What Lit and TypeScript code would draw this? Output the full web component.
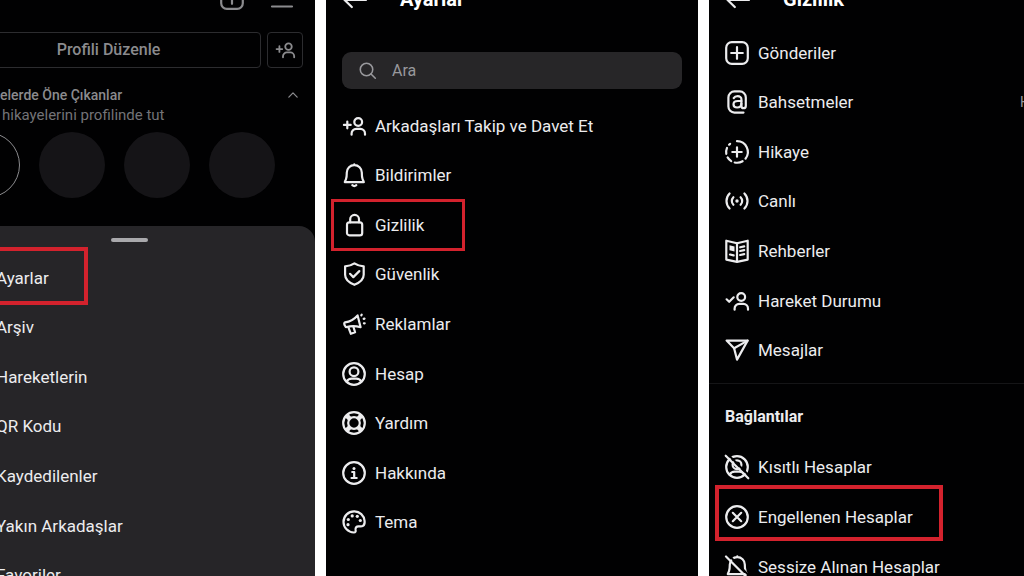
import { LitElement, html, svg, css, nothing, TemplateResult, SVGTemplateResult } from "lit";
import { customElement, property } from "lit/decorators.js";

const person = svg`<circle cx="16.2" cy="8" r="3.900"/><path d="M9.600 20.700v-1.200a4.600 4.600 0 0 1 4.600-4.600h4.200a4.600 4.600 0 0 1 4.600 4.600v1.200"/>`;
const bell = svg`<path d="M12.3 2.2a7.400 7.400 0 0 0-7.500 7.400c0 2.600 0 4.600-.8 6.600-.4 1.100-1 1.500-1.200 3h19c-.2-1.500-.8-1.900-1.200-3-.8-2-.8-4-.8-6.600a7.400 7.400 0 0 0-7.500-7.400zM12.300 2.200v-.9"/>`;

const icons: Record<string, SVGTemplateResult> = {
  addPerson: svg`<path d="M5.300 7.500v6.800M1.900 10.900h6.800"/>${person}`,
  checkPerson: svg`<path d="M1.600 10.300l2.600 2.500 4.500-4.500"/>${person}`,
  bell: svg`${bell}<path d="M10.300 22.200c1.200 1 2.800 1 4 0"/>`,
  bellOff: svg`${bell}<path d="M10.300 22.200c1.200 1 2.800 1 4 0"/><path class="cut" d="M3.500 0l22 22"/><path d="M1 1.500l22 22"/>`,
  lock: svg`<rect x="5" y="9.300" width="15.200" height="13" rx="2.400"/><path d="M8.200 9.300V6.300a4.400 4.400 0 0 1 8.800 0v3"/>`,
  shield: svg`<path d="M12.400 1.400c2.800 1.900 5.900 2.800 9.300 2.900v8.500c0 4.800-3.800 7.800-9.300 10-5.500-2.200-9.300-5.200-9.300-10V4.300c3.400-.1 6.500-1 9.300-2.900z"/><path d="M8 11.800l3.300 3.300 6-6"/>`,
  megaphone: svg`<path d="M3 10.400C8 9.600 12.200 7.200 15.600 3.400l3 11.800c-5-1.500-9.200-1.600-13.900-.2-1.500.300-3.600-4.100-1.700-4.600z"/><path d="M6.300 15.200l2.600 6.600 4.200-1.500-1.700-5.500"/><path d="M19.300 3.300l.4-.6M21.700 6.900l.8-.3M21.900 11.300h.8"/>`,
  account: svg`<circle cx="12" cy="12" r="10.800"/><circle cx="12" cy="9.700" r="4.400"/><path d="M4.700 19.700c1-2 2.900-3 5-3h4.600c2.100 0 4 1 5 3"/>`,
  help: svg`<circle cx="12" cy="12" r="10.800"/><circle cx="12" cy="12" r="5.800"/><path class="thick" d="M4.700 4.700l3.200 3.200M19.300 4.700l-3.200 3.200M4.700 19.300l3.200-3.200M19.300 19.300l-3.200-3.200"/>`,
  info: svg`<circle cx="12" cy="12" r="10.800"/><circle class="solid" cx="12" cy="7.400" r="1.500"/><path d="M10.200 11h2v6M9.500 17h5.200"/>`,
  palette: svg`<path d="M12.500 1.400C6.300 1.200 1.500 6 1.500 12c0 5.600 4.600 10.300 10.400 10.500 1.600 0 2-1.100 1.700-2.500-.3-2.200.8-3.800 3-3.700 1.500.1 3 .5 4.400-.4 1.500-1 1.800-3 1.600-4.900-.5-5.500-4.900-9.500-10.100-9.600z"/><g class="solid"><circle cx="6" cy="14.700" r="1.600"/><circle cx="6.300" cy="9.500" r="1.600"/><circle cx="10.200" cy="5.900" r="1.600"/><circle cx="15.300" cy="6.300" r="1.600"/><circle cx="18.300" cy="10.500" r="1.600"/></g>`,
  plusBox: svg`<rect x="1.200" y="1.200" width="21.600" height="21.600" rx="5.600"/><path d="M12 6.200v11.600M6.200 12h11.600"/>`,
  mention: svg`<path d="M18.500 22.600H9.400a6 6 0 0 1-6-6V7.400a6 6 0 0 1 6-6h5.400a6 6 0 0 1 6 6v8.500c0 3-4.400 3-4.400 0V9.200c0-1.800-1.500-3.100-3.800-3.100-1.900 0-3.200.8-3.900 2"/><path d="M16.400 11h-3.600c-2.500 0-4.300 1-4.300 3.200 0 2 1.500 3.300 3.600 3.300 2.600 0 4.300-1.600 4.300-4"/>`,
  story: svg`<path d="M12 1.200a10.800 10.800 0 0 1 8.500 17.500M17.600 21.200a10.800 10.800 0 0 1-7.900 1.300M6.200 21.100a10.800 10.800 0 0 1-3.600-3.700M1.300 13.800a10.800 10.800 0 0 1 .7-5.900M4.100 4.700a10.800 10.800 0 0 1 1-.9"/><path d="M12 7.300v9.400M7.300 12h9.400"/>`,
  live: svg`<circle class="solid" cx="12" cy="12" r="1.700"/><path d="M8.400 8.200a5.400 5.400 0 0 0 0 7.600M15.600 8.200a5.400 5.400 0 0 1 0 7.600M4.600 4.500a10.600 10.600 0 0 0 0 15M19.400 4.500a10.600 10.600 0 0 1 0 15"/>`,
  guides: svg`<path d="M12 4.200L1.300 1.700v18.900L12 22.800l10.700-2.200V1.700z"/><path d="M12 4.200v18"/><path d="M15.200 8.300l4-.9M15.200 12l4-.9M15.200 16l4-.9M5 15.500l3.600.9"/><path class="solid" d="M4.500 6.300l5 1.100v5l-5-1.100z"/>`,
  send: svg`<path d="M1.600 2.600h21L12 21.600 9.100 10.300z"/><path d="M9.100 10.300l13.500-7.700"/>`,
  restricted: svg`<circle cx="12" cy="12" r="10.800"/><circle cx="12" cy="9.700" r="4.400"/><path d="M4.700 19.700c1-2 2.900-3 5-3h4.600c2.100 0 4 1 5 3"/><path class="cut" d="M2.500 -1l23 23"/><path d="M.700 .700l22.600 22.600"/>`,
  blocked: svg`<circle cx="12" cy="12" r="10.800"/><path d="M7.800 7.800l8.400 8.400M16.200 7.800l-8.400 8.400"/>`,
  back: svg`<path d="M1.500 13h21.500M9.300 5.300L1.600 13l7.200 7"/>`,
  search: svg`<circle cx="10.600" cy="10.600" r="8.800"/><path d="M17 17l6 6"/>`,
  menu: svg`<path d="M2 4h20M2 12h20M2 20.500h20"/>`,
  chevron: svg`<path d="M2 17L12 7l10 10"/>`,
};

const iconStyles = css`
  .icon { display: block; flex: none; width: 24px; height: 24px; fill: none; stroke: currentColor; stroke-width: 2.2; stroke-linecap: round; stroke-linejoin: round; overflow: visible; }
  .icon .solid { fill: currentColor; stroke: none; }
  .icon .thick { stroke-width: 4.5; stroke-linecap: butt; }
  .icon .cut { stroke: #010102; stroke-width: 2; }
  .icon.small { width: 20px; height: 20px; }
  .icon.glass { width: 17px; height: 17px; }
  .icon.tiny { width: 10px; height: 10px; stroke-width: 3; }
`;

const icon = (name: string, size = ""): TemplateResult =>
  html`<svg class="icon ${size}" viewBox="0 0 24 24" aria-hidden="true">${icons[name]}</svg>`;

interface Item {
  label: string;
  icon?: string;
  marked?: boolean;
  value?: string;
}

@customElement("menu-list")
class MenuList extends LitElement {
  @property({ attribute: false }) items: Item[] = [];

  static styles = [
    iconStyles,
    css`
      :host { display: grid; font-size: 17px; }
      .list { display: grid; grid-auto-rows: minmax(44px, 1fr); list-style: none; margin: 0; padding: 0; }
      .row { display: flex; align-items: stretch; justify-content: space-between; }
      .link { position: relative; display: flex; align-items: center; gap: 9px; color: inherit; text-decoration: none; white-space: nowrap; }
      .mark { position: absolute; box-sizing: border-box; inset: var(--mark-inset, -1px -41px -1px -11px); border: var(--mark-width, 4px) solid #d3222d; pointer-events: none; }
      .value { align-self: center; width: 4px; font-size: 14px; color: #98989c; }
    `,
  ];

  render() {
    return html`<ul class="list">
      ${this.items.map(
        (item) => html`<li class="row">
          <a class="link" href="#">
            ${item.icon ? icon(item.icon) : nothing}
            <span>${item.label}</span>
            ${item.marked ? html`<span class="mark"></span>` : nothing}
          </a>
          ${item.value ? html`<span class="value">${item.value}</span>` : nothing}
        </li>`
      )}
    </ul>`;
  }
}

@customElement("app-root")
class AppRoot extends LitElement {
  static styles = [
    iconStyles,
    css`
      :host { display: block; font-family: Roboto, "Noto Sans", sans-serif; font-size: 16px; line-height: 20px; color: #ececee; }
      .screens { display: grid; grid-template-columns: 315fr 372fr 315fr; gap: 11px; height: 100vh; background: #fff; }
      .screen { display: flex; flex-direction: column; min-width: 0; overflow: hidden; background: #010102; }
      button { font: inherit; color: inherit; background: none; border: 0; padding: 0; cursor: pointer; }
      h1, h2, p { margin: 0; }

      .profile { color: #8b8b8e; }
      .tools { display: flex; justify-content: flex-end; gap: 26px; margin-top: -14px; padding-right: 21px; }
      .actions { display: flex; gap: 6px; margin: 22px 12px 0 -44px; }
      .edit, .invite { display: grid; place-items: center; box-sizing: border-box; height: 36px; border: 1px solid #2c2c2f; border-radius: 4px; }
      .edit { flex: 1; font-weight: 500; }
      .invite { width: 36px; }
      .highlights { display: flex; align-items: center; justify-content: space-between; margin: 17px 17px 0 0; }
      .heading { font-size: 14px; font-weight: 500; }
      .hint { color: #737377; font-size: 15px; padding-left: 2px; }
      .stories { display: flex; gap: 19px; margin: 7px 0 0 -46px; }
      .story { flex: none; box-sizing: border-box; width: 66px; height: 66px; border-radius: 50%; background: #151417; }
      .story.first { background: none; border: 1px solid #8b8b8e; }

      .sheet { flex: 1; display: flex; flex-direction: column; margin-top: 28px; background: #262528; border-radius: 0 16px 0 0; color: #ececee; }
      .grip { width: 37px; height: 4px; margin: 12px 0 11px 111px; border-radius: 2px; background: #a9a9ac; }
      .sheet-menu { flex: 1; margin: 0 0 -24px -4px; --mark-inset: -6px -39px -2px -11px; }

      .bar { display: flex; align-items: center; gap: 33px; height: 32px; margin-top: -17px; padding-left: 17px; }
      .title { font-size: 20px; line-height: 24px; font-weight: 700; color: #fff; }
      .search { display: flex; align-items: center; gap: 16px; height: 37px; margin: 37px 16px 12px; padding: 0 17px; box-sizing: border-box; border-radius: 9px; background: #272628; color: #98989c; }
      .field { flex: 1; min-width: 0; padding: 0; border: 0; outline: 0; background: none; font: inherit; color: inherit; }
      .field::placeholder { color: inherit; opacity: 1; }
      .settings { flex: 1; margin: 0 16px 29px; --mark-width: 3px; }
      .privacy { flex: 1; margin: 13px 0 0 16px; }
      .section { margin-top: 8px; padding: 23px 16px 15px; border-top: 1px solid #151517; font-size: 16px; font-weight: 700; }
      .connections { height: 150px; flex: none; margin: 0 16px -16px; --mark-inset: -7px -30px 1px -10px; }
    `,
  ];

  private sheetItems: Item[] = [
    { label: "Ayarlar", marked: true },
    { label: "Arşiv" },
    { label: "Hareketlerin" },
    { label: "QR Kodu" },
    { label: "Kaydedilenler" },
    { label: "Yakın Arkadaşlar" },
    { label: "Favoriler" },
  ];

  private settingsItems: Item[] = [
    { label: "Arkadaşları Takip ve Davet Et", icon: "addPerson" },
    { label: "Bildirimler", icon: "bell" },
    { label: "Gizlilik", icon: "lock", marked: true },
    { label: "Güvenlik", icon: "shield" },
    { label: "Reklamlar", icon: "megaphone" },
    { label: "Hesap", icon: "account" },
    { label: "Yardım", icon: "help" },
    { label: "Hakkında", icon: "info" },
    { label: "Tema", icon: "palette" },
  ];

  private privacyItems: Item[] = [
    { label: "Gönderiler", icon: "plusBox" },
    { label: "Bahsetmeler", icon: "mention", value: "H" },
    { label: "Hikaye", icon: "story" },
    { label: "Canlı", icon: "live" },
    { label: "Rehberler", icon: "guides" },
    { label: "Hareket Durumu", icon: "checkPerson" },
    { label: "Mesajlar", icon: "send" },
  ];

  private connectionItems: Item[] = [
    { label: "Kısıtlı Hesaplar", icon: "restricted" },
    { label: "Engellenen Hesaplar", icon: "blocked", marked: true },
    { label: "Sessize Alınan Hesaplar", icon: "bellOff" },
  ];

  render() {
    return html`<main class="screens">
      <section class="screen profile">
        <div class="tools">
          <button aria-label="Yeni">${icon("plusBox")}</button>
          <button aria-label="Menü">${icon("menu")}</button>
        </div>
        <div class="actions">
          <button class="edit">Profili Düzenle</button>
          <button class="invite" aria-label="Davet Et">${icon("addPerson", "small")}</button>
        </div>
        <div class="highlights">
          <h2 class="heading">elerde Öne Çıkanlar</h2>
          <button aria-label="Daralt">${icon("chevron", "tiny")}</button>
        </div>
        <p class="hint">hikayelerini profilinde tut</p>
        <div class="stories">
          <span class="story first"></span>
          <span class="story"></span>
          <span class="story"></span>
          <span class="story"></span>
        </div>
        <div class="sheet">
          <div class="grip"></div>
          <menu-list class="sheet-menu" .items=${this.sheetItems}></menu-list>
        </div>
      </section>

      <section class="screen">
        <header class="bar">
          <button aria-label="Geri">${icon("back")}</button>
          <h1 class="title">Ayarlar</h1>
        </header>
        <label class="search">
          ${icon("search", "glass")}
          <input class="field" type="text" placeholder="Ara" aria-label="Ara" />
        </label>
        <menu-list class="settings" .items=${this.settingsItems}></menu-list>
      </section>

      <section class="screen">
        <header class="bar">
          <button aria-label="Geri">${icon("back")}</button>
          <h1 class="title">Gizlilik</h1>
        </header>
        <menu-list class="privacy" .items=${this.privacyItems}></menu-list>
        <h2 class="section">Bağlantılar</h2>
        <menu-list class="connections" .items=${this.connectionItems}></menu-list>
      </section>
    </main>`;
  }
}
